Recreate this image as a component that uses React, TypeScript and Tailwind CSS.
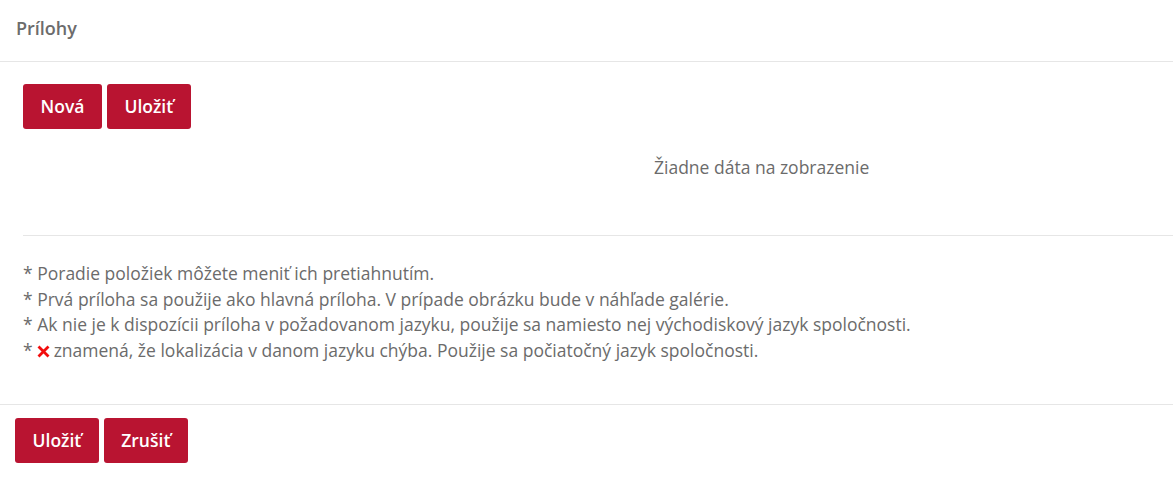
import React from 'react';

const Btn = ({ children }: { children: React.ReactNode }) => (
    <button className="h-[45px] px-[17.5px] bg-[#b91431] text-white text-[17.5px] font-semibold rounded-[3px]">
        {children}
    </button>
);

const notes = [
    '* Poradie položiek môžete meniť ich pretiahnutím.',
    '* Prvá príloha sa použije ako hlavná príloha. V prípade obrázku bude v náhľade galérie.',
    '* Ak nie je k dispozícii príloha v požadovanom jazyku, použije sa namiesto nej východiskový jazyk spoločnosti.',
];

export default function App() {
    return (
        <div className="w-[1173px] h-[479px] bg-white text-[#6b6b6b] font-['Open_Sans',sans-serif] text-[17.5px]">
            {/* header */}
            <div className="h-[62px] flex items-center px-4 border-b border-[#e6e6e6]">
                <h5 className="text-[18px] font-semibold text-[#6c6c6c] -mt-[4px]">Prílohy</h5>
            </div>

            <div className="pl-[23px]">
                <div className="pt-[22px] flex gap-[5px]">
                    <Btn>Nová</Btn>
                    <Btn>Uložiť</Btn>
                </div>
                <div className="h-[106px] flex items-start pl-[631px] pt-[25px]">
                    <span>Žiadne dáta na zobrazenie</span>
                </div>
                <div className="border-t border-[#e6e6e6] pt-[25px] pb-[40px] leading-[25.7px]">
                    {notes.map((n, i) => (
                        <p key={i}>{n}</p>
                    ))}
                    <p className="flex items-center">
                        <span>*</span>
                        <svg width="13" height="13" viewBox="0 0 13 13" className="ml-[4px] mr-[4px] mt-[1px]">
                            <path d="M1.5 1.5 L11.5 11.5 M11.5 1.5 L1.5 11.5" stroke="#f20d0d" strokeWidth="2.8" strokeLinecap="butt" />
                        </svg>
                        <span>znamená, že lokalizácia v danom jazyku chýba. Použije sa počiatočný jazyk spoločnosti.</span>
                    </p>
                </div>
            </div>

            {/* footer */}
            <div className="border-t border-[#e6e6e6] px-[15px] pt-[13px] flex gap-[5px]">
                <Btn>Uložiť</Btn>
                <Btn>Zrušiť</Btn>
            </div>
        </div>
    );
}
